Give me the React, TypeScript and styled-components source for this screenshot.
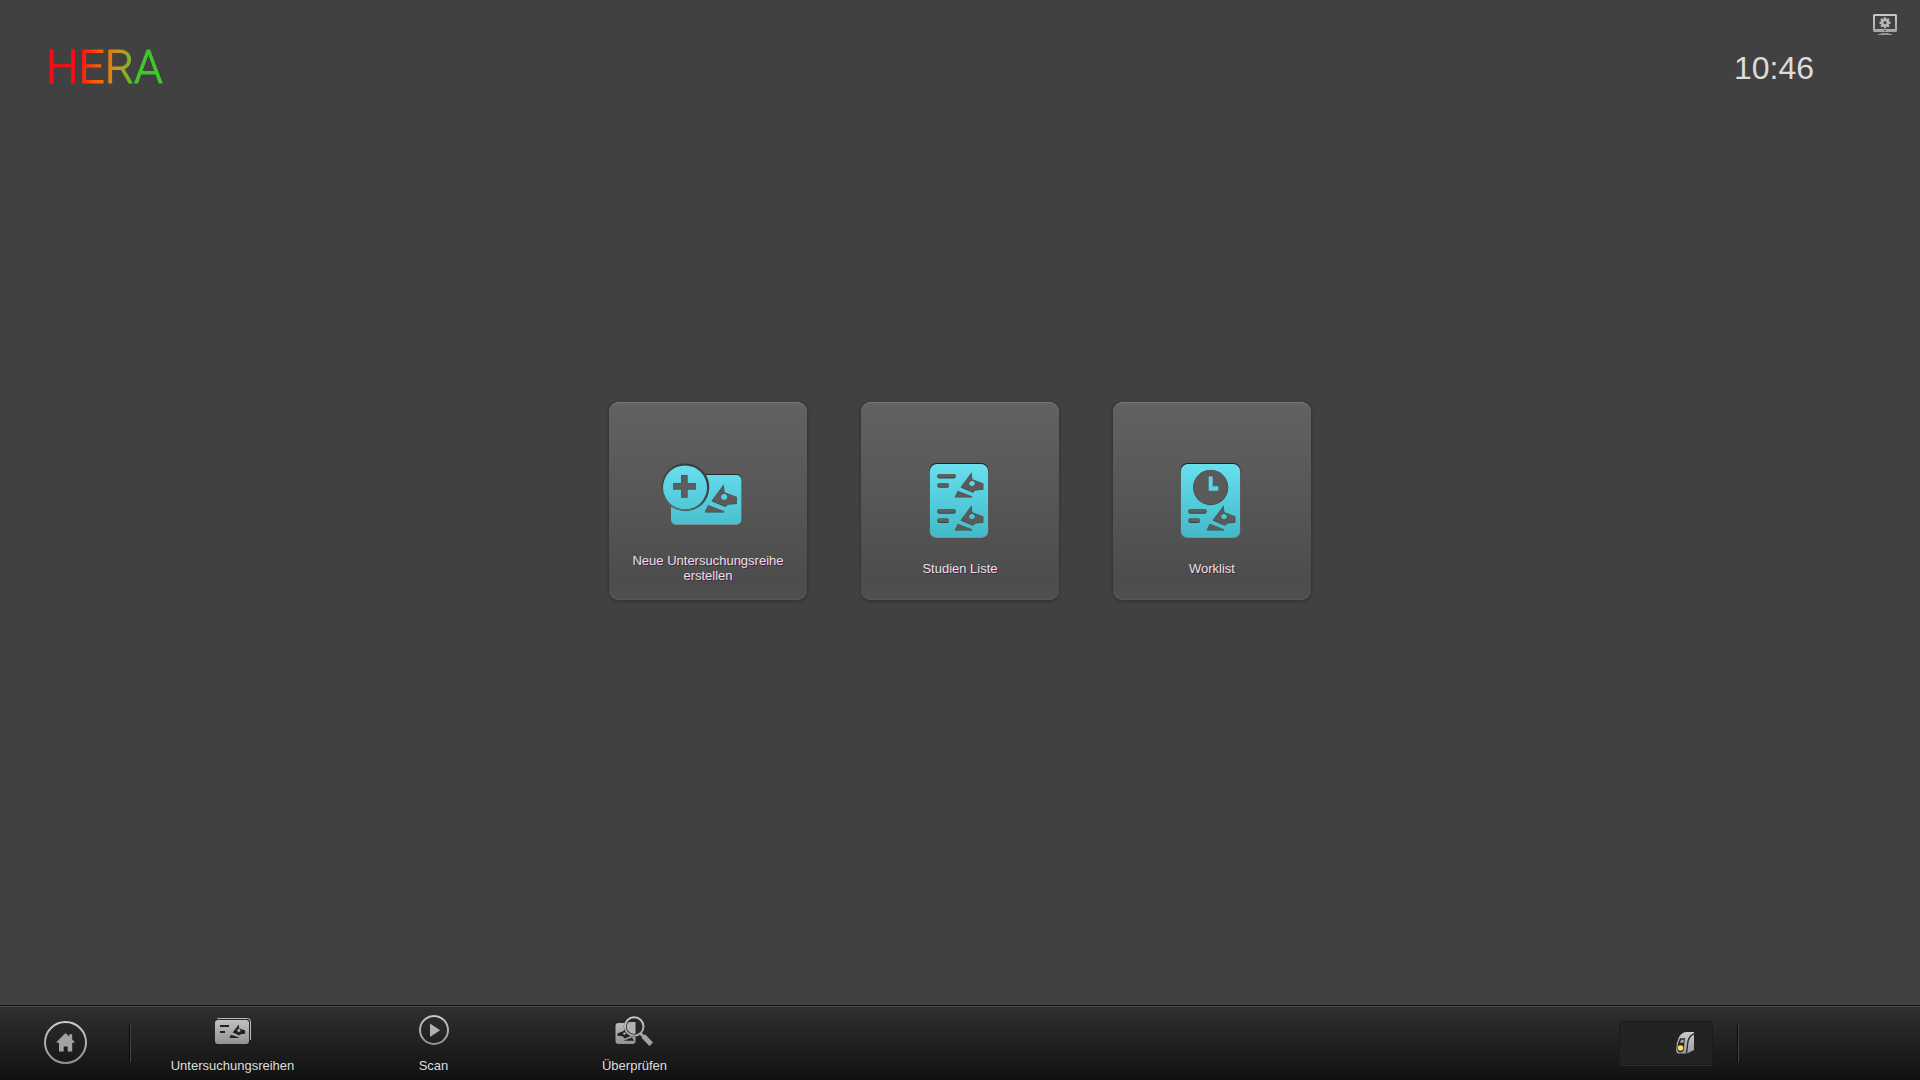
import React from "react";
import styled, { createGlobalStyle } from "styled-components";

const GlobalStyle = createGlobalStyle`
  *, *::before, *::after { box-sizing: border-box; }
  body {
    margin: 0;
    background: #414141;
    font-family: "Liberation Sans", Arial, sans-serif;
  }
  button {
    margin: 0;
    padding: 0;
    border: 0;
    background: none;
    color: inherit;
    font: inherit;
    cursor: pointer;
  }
  svg { display: block; }
`;

const Screen = styled.div`
  display: flex;
  flex-direction: column;
  min-height: 100vh;
  color: #dedede;
`;

const Header = styled.header`
  display: flex;
  justify-content: space-between;
  align-items: flex-start;
  height: 112px;
  padding: 12px 22px 0 46px;
`;

const Logo = styled.h1`
  margin: 0;
  padding-top: 28px;
  font-family: Roboto, "Liberation Sans", sans-serif;
  font-size: 46px;
  font-weight: 300;
  line-height: 54px;
  color: transparent;
  -webkit-text-stroke: 1px transparent;
  background: linear-gradient(100deg, #ff0a14 32%, #ff5a00 46%, #c99a20 62%, #3ccc28 78%);
  background-clip: text;
  -webkit-background-clip: text;
`;

const HeaderRight = styled.div`
  display: flex;
  align-items: flex-start;
  gap: 58px;
`;

const Clock = styled.time`
  padding-top: 37px;
  font-size: 32px;
  line-height: 38px;
  color: #dcdcdc;
`;

const Main = styled.main`
  flex: 1;
  display: flex;
  justify-content: center;
  align-items: center;
  gap: 54px;
  padding-bottom: 115px;
`;

const Tile = styled.button`
  display: flex;
  flex-direction: column;
  align-items: center;
  justify-content: flex-end;
  width: 198px;
  height: 198px;
  padding-bottom: 12px;
  border-radius: 10px;
  background: linear-gradient(#626262, #4c4c4c 92%, #515151);
  box-shadow: inset 0 1px 0 #777, inset 0 -1px 0 #595959, 0 1px 2px 1px #353535;
`;

const TileLabel = styled.span`
  display: flex;
  align-items: center;
  justify-content: center;
  width: 164px;
  height: 40px;
  margin-top: 5px;
  font-size: 13px;
  line-height: 15px;
  color: #e2e2e2;
  text-shadow: 1px 1px 0 #571650;
`;

const Footer = styled.footer`
  display: flex;
  justify-content: space-between;
  height: 75px;
  border-top: 1px solid #161616;
  background: linear-gradient(#303030, #111);
  box-shadow: inset 0 1px 0 #4b4b4b;
`;

const FooterGroup = styled.div`
  display: flex;
  align-items: center;
`;

const HomeButton = styled.button`
  margin: 0 42px 0 43px;
`;

const Divider = styled.span`
  width: 2px;
  height: 37px;
  background: linear-gradient(90deg, #090909 50%, #444 50%);
`;

const NavButton = styled.button`
  display: flex;
  flex-direction: column;
  align-items: center;
  gap: 12px;
  width: 201px;
  height: 100%;
  padding-top: 8px;
  font-size: 13px;
  line-height: 15px;
`;

const Nav = styled.nav`
  display: flex;
  height: 100%;
  margin-left: 1px;
`;

const StatusGroup = styled(FooterGroup)`
  gap: 24px;
  padding-right: 181px;
`;

const ProbeButton = styled.button`
  display: flex;
  align-items: center;
  justify-content: flex-end;
  width: 94px;
  height: 44px;
  padding-right: 18px;
  border-radius: 4px;
  background: #232323;
  box-shadow: inset 0 0 0 1px #1b1b1b, 0 1px 0 #303030;
`;

const HEAD =
  "M17.7 0.3 L18.3 7.300 L29.3 11.3 V17.3 L21.3 18 L19 20.2 L6.7 15 Z M18 8.3 a3 3 0 1 0 0.01 0 Z";
const NECK = "M3.700 18.800 L18 24.200 V25 H0.7 Z";

function Horse({ at, fill }: { at: string; fill: string }) {
  return <path transform={at} d={`${HEAD} ${NECK}`} fill={fill} fillRule="evenodd" />;
}

function CutHorse({ x, y, scale = 1 }: { x: number; y: number; scale?: number }) {
  return (
    <>
      <Horse at={`translate(${x} ${y + 0.5}) scale(${scale})`} fill="#2f4448" />
      <Horse at={`translate(${x} ${y}) scale(${scale})`} fill="#5a5a5a" />
    </>
  );
}

function CutBar({ x, y, width }: { x: number; y: number; width: number }) {
  return (
    <>
      <rect x={x} y={y} width={width} height="4.4" rx="2" fill="#2f4448" />
      <rect x={x} y={y} width={width} height="3.5" rx="1.7" fill="#5f5f5f" />
    </>
  );
}

function Cyan({ id }: { id: string }) {
  return (
    <linearGradient id={id} x1="0" y1="4" x2="0" y2="79" gradientUnits="userSpaceOnUse">
      <stop offset="0" stopColor="#68e0ee" />
      <stop offset="1" stopColor="#43b9c8" />
    </linearGradient>
  );
}

function Silver({ id, height = 32 }: { id: string; height?: number }) {
  return (
    <linearGradient id={id} x1="0" y1="0" x2="0" y2={height} gradientUnits="userSpaceOnUse">
      <stop offset="0" stopColor="#cdcdcd" />
      <stop offset="1" stopColor="#8f8f8f" />
    </linearGradient>
  );
}

function NewStudyIcon() {
  return (
    <svg width="96" height="84" viewBox="0 0 96 84" aria-hidden="true">
      <defs><Cyan id="cyan-new" /></defs>
      <rect x="11" y="15" width="70.3" height="50" rx="5" fill="#262626" />
      <rect x="11" y="17" width="70.3" height="49" rx="5" fill="#858585" />
      <rect x="11" y="16" width="70.3" height="49.3" rx="5" fill="url(#cyan-new)" />
      <circle cx="25.3" cy="28.2" r="24" fill="#3a4446" />
      <circle cx="24.7" cy="28.8" r="23" fill="#757575" />
      <circle cx="25" cy="28" r="22.8" fill="#333" />
      <circle cx="25" cy="28.4" r="22" fill="url(#cyan-new)" />
      <path d="M21 16h6.7v8H36v6.7h-8.3v8H21v-8h-8V24h8z" fill="#36646b" />
      <path d="M21.6 17h5.6v7.7H36v5.6h-8.8v8.4h-5.6v-8.4H13v-5.6h8.6z" fill="#5d5d5d" />
      <CutHorse x={44} y={25} scale={1.12} />
    </svg>
  );
}

function StudyListIcon() {
  return (
    <svg width="96" height="84" viewBox="0 0 96 84" aria-hidden="true">
      <defs><Cyan id="cyan-list" /></defs>
      <rect x="17.6" y="4" width="58.8" height="73" rx="7" fill="#222" />
      <rect x="17.6" y="6" width="58.8" height="73" rx="7" fill="#858585" />
      <rect x="18" y="5" width="58" height="73.2" rx="7" fill="url(#cyan-list)" />
      <CutBar x={25.3} y={15} width={18.4} />
      <CutBar x={25.3} y={24.3} width={11.7} />
      <CutHorse x={42} y={13} />
      <CutBar x={25.3} y={50.3} width={18.4} />
      <CutBar x={25.3} y={59.6} width={11.7} />
      <CutHorse x={42} y={46} />
    </svg>
  );
}

function WorklistIcon() {
  return (
    <svg width="96" height="84" viewBox="0 0 96 84" aria-hidden="true">
      <defs><Cyan id="cyan-work" /></defs>
      <rect x="16.6" y="4" width="59.8" height="73" rx="7" fill="#222" />
      <rect x="16.6" y="6" width="59.8" height="73" rx="7" fill="#858585" />
      <rect x="17" y="5" width="59" height="73.2" rx="7" fill="url(#cyan-work)" />
      <circle cx="46.7" cy="28.6" r="17.6" fill="#33474a" />
      <circle cx="46.7" cy="28.2" r="17.3" fill="#5a5a5a" />
      <path d="M44.7 17.5h4v9.8h5.6v4.4h-9.6z" fill="url(#cyan-work)" />
      <CutBar x={24.3} y={50.3} width={18.4} />
      <CutBar x={24.3} y={59.6} width={11.7} />
      <CutHorse x={42} y={46} />
    </svg>
  );
}

function MonitorIcon() {
  return (
    <svg width="26" height="24" viewBox="0 0 26 24" aria-hidden="true">
      <defs><Silver id="silver-monitor" height={30} /></defs>
      <path
        d="M2.5 2h21A1.5 1.5 0 0 1 25 3.500v15a1.500 1.500 0 0 1-1.500 1.500h-21A1.500 1.500 0 0 1 1 18.500v-15A1.500 1.500 0 0 1 2.500 2zM3 4v14h20V4z"
        fill="url(#silver-monitor)"
        fillRule="evenodd"
      />
      <path d="M3 17h20v2H3z" fill="#aaa" />
      <rect x="12" y="18" width="2" height="1" fill="#444" />
      <path d="M9 21h8v1h3v1H6v-1h3z" fill="#999" />
      <g stroke="#b4b4b4" strokeWidth="2.4">
        <path d="M13 5.200v11M7.500 10.700h11M9.100 6.800l7.800 7.800M16.900 6.800l-7.800 7.800" />
      </g>
      <circle cx="13" cy="10.700" r="3.900" fill="#b8b8b8" />
      <circle cx="13" cy="10.700" r="1.600" fill="#444" />
    </svg>
  );
}

function HomeIcon() {
  return (
    <svg width="44" height="44" viewBox="0 0 44 44" aria-hidden="true">
      <defs><Silver id="silver-home" height={44} /></defs>
      <circle cx="22.5" cy="21.5" r="20.500" fill="none" stroke="url(#silver-home)" strokeWidth="2" />
      <path
        d="M22.500 12l3.700 3.600v-2.400h3v5.300l2.300 2.300v.9h-2.300v8.700h-4.500v-5h-4v5h-4.700v-8.700h-2.300v-.9z"
        fill="#a2a2a2"
      />
    </svg>
  );
}

function StudiesIcon() {
  return (
    <svg width="40" height="32" viewBox="0 0 40 32" aria-hidden="true">
      <defs><Silver id="silver-studies" /></defs>
      <path d="M4.500 4.500h30a3 3 0 0 1 3 3V26" fill="none" stroke="#bcbcbc" strokeWidth="1" />
      <rect x="2" y="6" width="34" height="24" rx="3" fill="url(#silver-studies)" />
      <path d="M7 12h9M7 18h5" stroke="#222" strokeWidth="2" />
      <Horse at="translate(16 10.300) scale(.55)" fill="#222" />
    </svg>
  );
}

function ScanIcon() {
  return (
    <svg width="40" height="32" viewBox="0 0 40 32" aria-hidden="true">
      <defs><Silver id="silver-scan" /></defs>
      <circle cx="20" cy="16" r="14" fill="none" stroke="url(#silver-scan)" strokeWidth="2" />
      <path d="M16 9.500L26.200 16.200 16 23z" fill="#b0b0b0" />
    </svg>
  );
}

function ReviewIcon() {
  return (
    <svg width="40" height="32" viewBox="0 0 40 32" aria-hidden="true">
      <defs><Silver id="silver-review" /></defs>
      <rect x=".5" y="9" width="20" height="21" rx="3" fill="url(#silver-review)" />
      <path d="M2.500 19.500L8 17.200l2.500-2 1.500 3 3.500 4-6 2.300-2-2.200-5-.5z" fill="#242424" />
      <circle cx="9.500" cy="19.500" r="1.300" fill="#aaa" />
      <path d="M8.500 26.800l8.500-3.300 2 3.300z" fill="#242424" />
      <circle cx="19.200" cy="12.500" r="10.500" fill="#272727" />
      <path d="M20.500 8v11.800A7.400 7.400 0 0 1 12.600 9.200Q13.500 8 15 8z" fill="#b2b2b2" />
      <circle cx="19.200" cy="12.500" r="9.300" fill="none" stroke="url(#silver-review)" strokeWidth="2" />
      <path d="M25.500 19.500l3 3" stroke="#aaa" strokeWidth="2.500" />
      <path d="M30 23.800l4.500 4.700" stroke="#a2a2a2" strokeWidth="5" strokeLinecap="square" />
    </svg>
  );
}

function ProbeIcon() {
  return (
    <svg width="20" height="24" viewBox="0 0 20 24" aria-hidden="true">
      <defs><Silver id="silver-probe" height={28} /></defs>
      <path d="M4 6Q7 1 12 1h7v18l-7 3.500H3Q1 22 1.200 18.500 1.500 11 4 6z" fill="url(#silver-probe)" />
      <path d="M19 2.800Q14.500 4.500 13 10l-1.500 12.500" fill="none" stroke="#242424" strokeWidth="1.300" />
      <path d="M5 7.300h5l-.7 5.200L8.800 19Q8 21.500 5 21.300 2 21 2.200 17L3.500 11z" fill="#252525" />
      <path d="M6 8.800h3l-.5 3H5z" fill="#a5a5a5" />
      <circle cx="5.500" cy="17" r="2.800" fill="#ffdc5a" />
    </svg>
  );
}

const tiles = [
  { label: "Neue Untersuchungsreihe erstellen", Icon: NewStudyIcon },
  { label: "Studien Liste", Icon: StudyListIcon },
  { label: "Worklist", Icon: WorklistIcon },
];

const navItems = [
  { label: "Untersuchungsreihen", Icon: StudiesIcon },
  { label: "Scan", Icon: ScanIcon },
  { label: "Überprüfen", Icon: ReviewIcon },
];

export default function App() {
  return (
    <>
      <GlobalStyle />
      <Screen>
        <Header>
          <Logo>HERA</Logo>
          <HeaderRight>
            <Clock>10:46</Clock>
            <button type="button" aria-label="System">
              <MonitorIcon />
            </button>
          </HeaderRight>
        </Header>
        <Main>
          {tiles.map(({ label, Icon }) => (
            <Tile key={label} type="button">
              <Icon />
              <TileLabel>{label}</TileLabel>
            </Tile>
          ))}
        </Main>
        <Footer>
          <FooterGroup>
            <HomeButton type="button" aria-label="Home">
              <HomeIcon />
            </HomeButton>
            <Divider />
            <Nav>
              {navItems.map(({ label, Icon }) => (
                <NavButton key={label} type="button">
                  <Icon />
                  {label}
                </NavButton>
              ))}
            </Nav>
          </FooterGroup>
          <StatusGroup>
            <ProbeButton type="button" aria-label="Probe">
              <ProbeIcon />
            </ProbeButton>
            <Divider />
          </StatusGroup>
        </Footer>
      </Screen>
    </>
  );
}
